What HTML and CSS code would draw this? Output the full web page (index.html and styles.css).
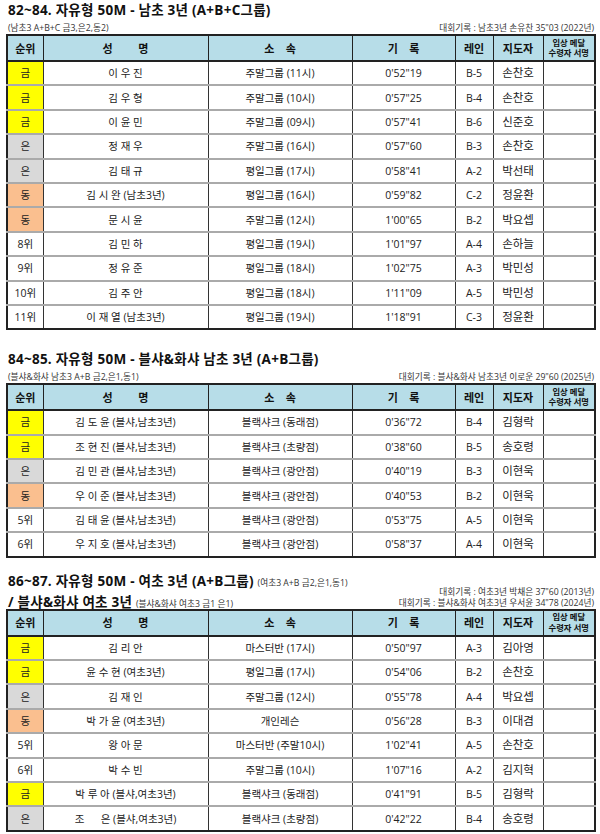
FILE: index.html
```html
<!DOCTYPE html>
<html lang="ko">
<head>
<meta charset="utf-8">
<title>자유형 50M 결과</title>
<link rel="stylesheet" href="styles.css">
</head>
<body>
<div class="page">

<section class="sec sec1">
  <h2 class="title">82~84. 자유형 50M - 남초 3년 (A+B+C그룹)</h2>
  <div class="subrow">
    <span class="note">(남초3 A+B+C 금3,은2,동2)</span>
    <span class="record">대회기록 : 남초3년 손유찬 35"03 (2022년)</span>
  </div>
  <table class="res">
    <colgroup><col class="c1"><col class="c2"><col class="c3"><col class="c4"><col class="c5"><col class="c6"><col class="c7"></colgroup>
    <thead><tr><th>순위</th><th>성&nbsp;&nbsp;&nbsp;&nbsp;&nbsp;&nbsp;&nbsp;&nbsp;&nbsp;명</th><th>소&nbsp;&nbsp;&nbsp;&nbsp;속</th><th>기&nbsp;&nbsp;&nbsp;&nbsp;록</th><th>레인</th><th>지도자</th><th class="sign">입상 메달<br>수령자 서명</th></tr></thead>
    <tbody>
      <tr><td class="gold">금</td><td>이 우 진</td><td>주말그룹 (11시)</td><td>0'52"19</td><td>B-5</td><td class="coach">손찬호</td><td></td></tr>
      <tr><td class="gold">금</td><td>김 우 형</td><td>주말그룹 (10시)</td><td>0'57"25</td><td>B-4</td><td class="coach">손찬호</td><td></td></tr>
      <tr><td class="gold">금</td><td>이 윤 민</td><td>주말그룹 (09시)</td><td>0'57"41</td><td>B-6</td><td class="coach">신준호</td><td></td></tr>
      <tr><td class="silver">은</td><td>정 재 우</td><td>주말그룹 (16시)</td><td>0'57"60</td><td>B-3</td><td class="coach">손찬호</td><td></td></tr>
      <tr><td class="silver">은</td><td>김 태 규</td><td>평일그룹 (17시)</td><td>0'58"41</td><td>A-2</td><td class="coach">박선태</td><td></td></tr>
      <tr><td class="bronze">동</td><td>김 시 완 (남초3년)</td><td>평일그룹 (16시)</td><td>0'59"82</td><td>C-2</td><td class="coach">정윤환</td><td></td></tr>
      <tr><td class="bronze">동</td><td>문 시 윤</td><td>주말그룹 (12시)</td><td>1'00"65</td><td>B-2</td><td class="coach">박요셉</td><td></td></tr>
      <tr><td>8위</td><td>김 민 하</td><td>평일그룹 (19시)</td><td>1'01"97</td><td>A-4</td><td class="coach">손하늘</td><td></td></tr>
      <tr><td>9위</td><td>정 유 준</td><td>평일그룹 (18시)</td><td>1'02"75</td><td>A-3</td><td class="coach">박민성</td><td></td></tr>
      <tr><td>10위</td><td>김 주 안</td><td>평일그룹 (18시)</td><td>1'11"09</td><td>A-5</td><td class="coach">박민성</td><td></td></tr>
      <tr><td>11위</td><td>이 재 열 (남초3년)</td><td>평일그룹 (19시)</td><td>1'18"91</td><td>C-3</td><td class="coach">정윤환</td><td></td></tr>
    </tbody>
  </table>
</section>

<section class="sec sec2">
  <h2 class="title">84~85. 자유형 50M - 블샤&amp;화샤 남초 3년 (A+B그룹)</h2>
  <div class="subrow">
    <span class="note">(블샤&amp;화샤 남초3 A+B 금2,은1,동1)</span>
    <span class="record">대회기록 : 블샤&amp;화샤 남초3년 이로운 29"60 (2025년)</span>
  </div>
  <table class="res">
    <colgroup><col class="c1"><col class="c2"><col class="c3"><col class="c4"><col class="c5"><col class="c6"><col class="c7"></colgroup>
    <thead><tr><th>순위</th><th>성&nbsp;&nbsp;&nbsp;&nbsp;&nbsp;&nbsp;&nbsp;&nbsp;&nbsp;명</th><th>소&nbsp;&nbsp;&nbsp;&nbsp;속</th><th>기&nbsp;&nbsp;&nbsp;&nbsp;록</th><th>레인</th><th>지도자</th><th class="sign">입상 메달<br>수령자 서명</th></tr></thead>
    <tbody>
      <tr><td class="gold">금</td><td>김 도 윤 (블샤,남초3년)</td><td>블랙샤크 (동래점)</td><td>0'36"72</td><td>B-4</td><td class="coach">김형락</td><td></td></tr>
      <tr><td class="gold">금</td><td>조 현 진 (블샤,남초3년)</td><td>블랙샤크 (초량점)</td><td>0'38"60</td><td>B-5</td><td class="coach">송호령</td><td></td></tr>
      <tr><td class="silver">은</td><td>김 민 관 (블샤,남초3년)</td><td>블랙샤크 (광안점)</td><td>0'40"19</td><td>B-3</td><td class="coach">이현욱</td><td></td></tr>
      <tr><td class="bronze">동</td><td>우 이 준 (블샤,남초3년)</td><td>블랙샤크 (광안점)</td><td>0'40"53</td><td>B-2</td><td class="coach">이현욱</td><td></td></tr>
      <tr><td>5위</td><td>김 태 윤 (블샤,남초3년)</td><td>블랙샤크 (광안점)</td><td>0'53"75</td><td>A-5</td><td class="coach">이현욱</td><td></td></tr>
      <tr><td>6위</td><td>우 지 호 (블샤,남초3년)</td><td>블랙샤크 (광안점)</td><td>0'58"37</td><td>A-4</td><td class="coach">이현욱</td><td></td></tr>
    </tbody>
  </table>
</section>

<section class="sec sec3">
  <div class="head3">
    <div class="titles">
      <h2 class="title">86~87. 자유형 50M - 여초 3년 (A+B그룹) <span class="note">(여초3 A+B 금2,은1,동1)</span></h2>
      <h2 class="title">/ 블샤&amp;화샤 여초 3년 <span class="note">(블샤&amp;화샤 여초3 금1 은1)</span></h2>
    </div>
    <div class="records">
      <span class="record">대회기록 : 여초3년 박채은 37"60 (2013년)</span>
      <span class="record">대회기록 : 블샤&amp;화샤 여초3년 우서윤 34"78 (2024년)</span>
    </div>
  </div>
  <table class="res">
    <colgroup><col class="c1"><col class="c2"><col class="c3"><col class="c4"><col class="c5"><col class="c6"><col class="c7"></colgroup>
    <thead><tr><th>순위</th><th>성&nbsp;&nbsp;&nbsp;&nbsp;&nbsp;&nbsp;&nbsp;&nbsp;&nbsp;명</th><th>소&nbsp;&nbsp;&nbsp;&nbsp;속</th><th>기&nbsp;&nbsp;&nbsp;&nbsp;록</th><th>레인</th><th>지도자</th><th class="sign">입상 메달<br>수령자 서명</th></tr></thead>
    <tbody>
      <tr><td class="gold">금</td><td>김 리 안</td><td>마스터반 (17시)</td><td>0'50"97</td><td>A-3</td><td class="coach">김아영</td><td></td></tr>
      <tr><td class="gold">금</td><td>윤 수 현 (여초3년)</td><td>평일그룹 (17시)</td><td>0'54"06</td><td>B-2</td><td class="coach">손찬호</td><td></td></tr>
      <tr><td class="silver">은</td><td>김 재 인</td><td>주말그룹 (12시)</td><td>0'55"78</td><td>A-4</td><td class="coach">박요셉</td><td></td></tr>
      <tr><td class="bronze">동</td><td>박 가 윤 (여초3년)</td><td>개인레슨</td><td>0'56"28</td><td>B-3</td><td class="coach">이대겸</td><td></td></tr>
      <tr><td>5위</td><td>왕 아 문</td><td>마스터반 (주말10시)</td><td>1'02"41</td><td>A-5</td><td class="coach">손찬호</td><td></td></tr>
      <tr><td>6위</td><td>박 수 빈</td><td>주말그룹 (10시)</td><td>1'07"16</td><td>A-2</td><td class="coach">김지혁</td><td></td></tr>
      <tr class="sep"><td class="gold">금</td><td>박 루 아 (블샤,여초3년)</td><td>블랙샤크 (동래점)</td><td>0'41"91</td><td>B-5</td><td class="coach">김형락</td><td></td></tr>
      <tr><td class="silver">은</td><td>조&nbsp;&nbsp;&nbsp;&nbsp;&nbsp;&nbsp;은 (블샤,여초3년)</td><td>블랙샤크 (초량점)</td><td>0'42"22</td><td>B-4</td><td class="coach">송호령</td><td></td></tr>
    </tbody>
  </table>
</section>

</div>
</body>
</html>
```

FILE: styles.css
```css
* { box-sizing: border-box; }
html, body { margin: 0; padding: 0; background: #fff; }
body {
  font-family: "Open Sans", "Noto Sans CJK KR", sans-serif;
  color: #222;
}
.page { padding: 2px 6px 0 6px; width: 600px; }

.title {
  margin: 0;
  font-size: 13.5px;
  font-weight: 700;
  line-height: 16px;
  letter-spacing: 0.25px;
  color: #111;
  padding-left: 2px;
  white-space: nowrap;
}
.subrow {
  display: flex;
  justify-content: space-between;
  align-items: flex-end;
  height: 16px;
  padding-left: 2px;
}
.note { font-size: 8.7px; font-weight: 400; color: #333; letter-spacing: 0; }
.record { font-size: 8.7px; color: #333; }

.sec2 { margin-top: 21px; }
.sec3 { margin-top: 15px; }

.head3 { display: flex; justify-content: space-between; align-items: flex-end; height: 36px; }
.head3 .titles { display: flex; flex-direction: column; gap: 3px; align-self: flex-start; }
.head3 .records { display: flex; flex-direction: column; align-items: flex-end; line-height: 11px; }

.res {
  width: 588px;
  border-collapse: collapse;
  border: 2px solid #222;
  table-layout: fixed;
}
.c1 { width: 36px; }
.c2 { width: 165px; }
.c3 { width: 144px; }
.c4 { width: 103px; }
.c5 { width: 38px; }
.c6 { width: 50px; }
.c7 { width: 52px; }

.res thead tr { height: 26px; }
.res th {
  background: #b7dde8;
  font-size: 11px;
  font-weight: 700;
  color: #111;
  border: 1px solid #222;
  border-bottom: 2px solid #222;
  padding: 0;
  text-align: center;
  white-space: nowrap;
  line-height: 13px;
}
.res th.sign { font-size: 8.3px; line-height: 10.5px; }
.res tbody tr { height: 24.4px; }
.res td {
  font-size: 10.5px;
  line-height: 14px;
  text-align: center;
  padding: 0;
  border-left: 1px solid #333;
  border-right: 1px solid #333;
  border-top: 2px solid #aaa;
  border-bottom: 2px solid #aaa;
  white-space: nowrap;
  color: #222;
}
.res td.coach { font-size: 11.5px; }
.res tbody tr:first-child td { border-top: 2px solid #222; }
.res tbody tr:last-child td { border-bottom: 2px solid #222; }
.res tr.sep td { border-top: 2px solid #222; }

.gold { background: #ffff00; }
.silver { background: #d9d9d9; }
.bronze { background: #fabf8f; }
```
